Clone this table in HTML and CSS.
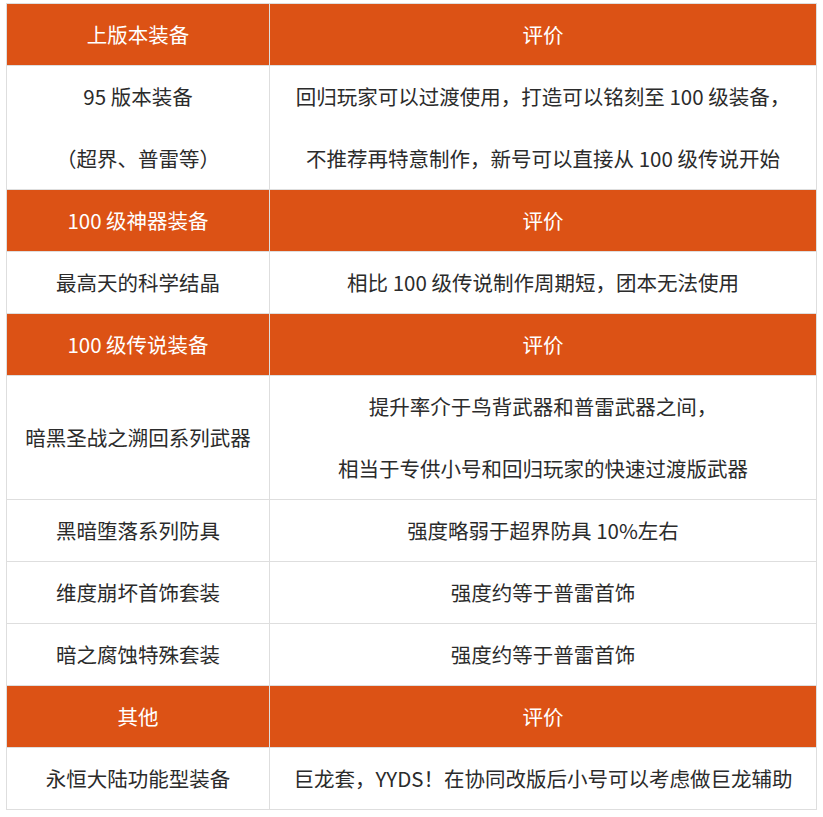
FILE: index.html
```html
<!DOCTYPE html>
<html lang="zh">
<head>
<meta charset="utf-8">
<link rel="stylesheet" href="styles.css">
</head>
<body>
<div class="wrap">
<table class="gear">
  <colgroup><col class="c1"><col class="c2"></colgroup>
  <tr class="head"><td>上版本装备</td><td>评价</td></tr>
  <tr><td><div class="ln">95 版本装备</div><div class="ln">（超界、普雷等）</div></td>
      <td><div class="ln">回归玩家可以过渡使用，打造可以铭刻至 100 级装备，</div><div class="ln">不推荐再特意制作，新号可以直接从 100 级传说开始</div></td></tr>
  <tr class="head"><td>100 级神器装备</td><td>评价</td></tr>
  <tr><td>最高天的科学结晶</td><td>相比 100 级传说制作周期短，团本无法使用</td></tr>
  <tr class="head"><td>100 级传说装备</td><td>评价</td></tr>
  <tr><td>暗黑圣战之溯回系列武器</td>
      <td><div class="ln">提升率介于鸟背武器和普雷武器之间，</div><div class="ln">相当于专供小号和回归玩家的快速过渡版武器</div></td></tr>
  <tr><td>黑暗堕落系列防具</td><td>强度略弱于超界防具 10%左右</td></tr>
  <tr><td>维度崩坏首饰套装</td><td>强度约等于普雷首饰</td></tr>
  <tr><td>暗之腐蚀特殊套装</td><td>强度约等于普雷首饰</td></tr>
  <tr class="head"><td>其他</td><td>评价</td></tr>
  <tr><td>永恒大陆功能型装备</td><td>巨龙套，YYDS！在协同改版后小号可以考虑做巨龙辅助</td></tr>
</table>
</div>
</body>
</html>
```

FILE: styles.css
```css
html, body {
  margin: 0;
  padding: 0;
  background: #ffffff;
}
.wrap {
  padding: 3px 0 0 6px;
}
.gear {
  border-collapse: collapse;
  width: 811px;
  table-layout: fixed;
  font-family: "Microsoft YaHei", "Noto Sans CJK SC", "Noto Sans", sans-serif;
  font-size: 20.5px;
  color: #2b2b2b;
}
.c1 { width: 263px; }
.gear td {
  border: 1px solid #dedede;
  text-align: center;
  vertical-align: middle;
  padding: 0;
  height: 61px;
  line-height: 61px;
}
.gear .ln {
  height: 61.5px;
  line-height: 61.5px;
}
.gear tr.head td {
  background: #dc5215;
  color: #ffffff;
}
```
